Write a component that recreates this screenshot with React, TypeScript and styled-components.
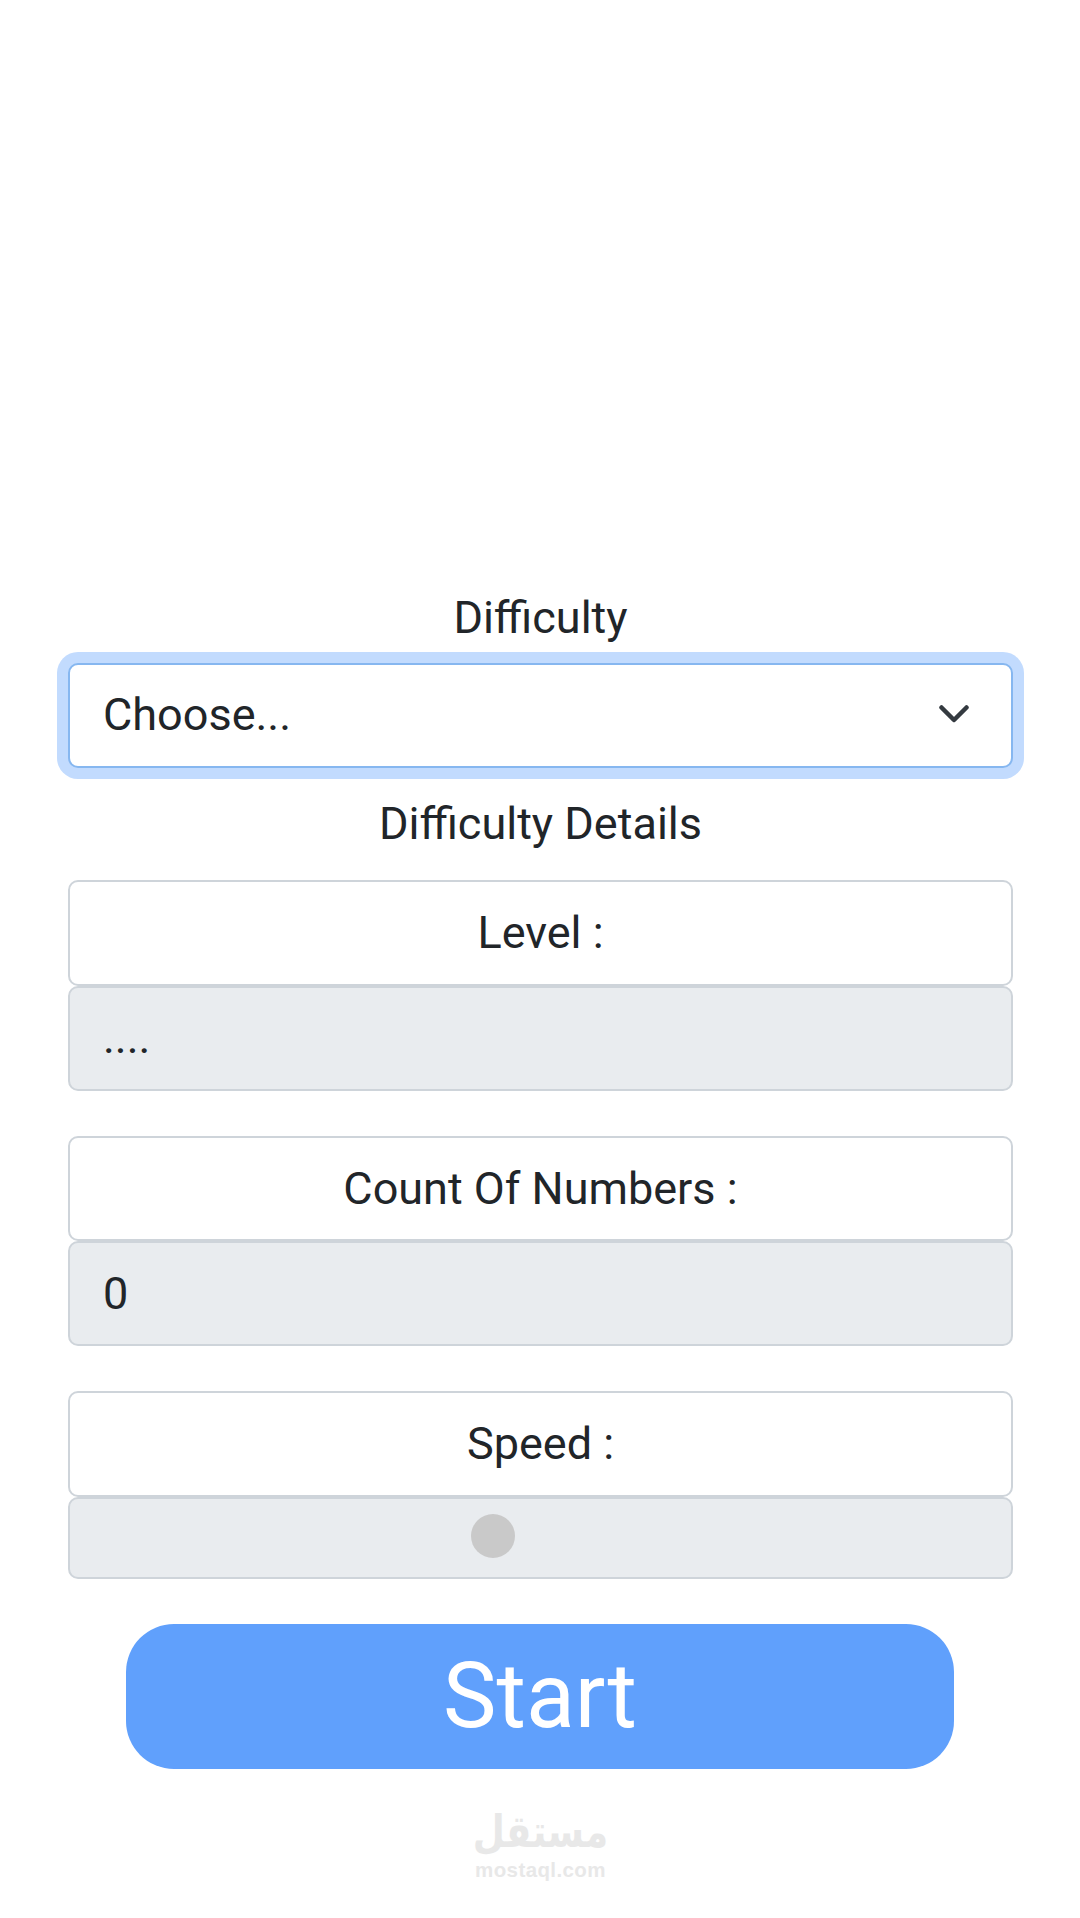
import styled, { createGlobalStyle } from "styled-components"

const GlobalStyle = createGlobalStyle`
  html, body {
    margin: 0;
    padding: 0;
    background: #fff;
    font-family: Roboto, "Liberation Sans", sans-serif;
    color: #212529;
  }
`

type GroupType = {
  label: string
  children: React.ReactNode
}

const Group = (props: GroupType) => (
  <InputGroup>
    <GroupLabel>{props.label}</GroupLabel>
    {props.children}
  </InputGroup>
)

export default function App() {
  return (
    <Page>
      <GlobalStyle />
      <Title>Difficulty</Title>
      <SelectBox>
        Choose...
        <svg width="30" height="18" viewBox="0 0 30 18" fill="none">
          <path d="M2.5 2.5L15 15L27.5 2.5" stroke="#343a40" strokeWidth="4.5" strokeLinecap="round" strokeLinejoin="round" />
        </svg>
      </SelectBox>
      <DetailsTitle>Difficulty Details</DetailsTitle>
      <Group label="Level :">
        <ValueBox>....</ValueBox>
      </Group>
      <Group label="Count Of Numbers :">
        <ValueBox>0</ValueBox>
      </Group>
      <Group label="Speed :">
        <SliderBox>
          <Thumb />
        </SliderBox>
      </Group>
      <StartButton>Start</StartButton>
      <Logo>
        <LogoArabic>مستقل</LogoArabic>
        <LogoLatin>mostaql.com</LogoLatin>
      </Logo>
    </Page>
  )
}

const Page = styled.div`
  width: 1080px;
  height: 1918px;
  box-sizing: border-box;
  padding: 590px 67px 0 68px;
  display: flex;
  flex-direction: column;
  align-items: stretch;
  overflow: hidden;
`

const Title = styled.div`
  height: 62px;
  line-height: 56px;
  font-size: 45px;
  text-align: center;
  margin-bottom: 11px;
`

const SelectBox = styled.div`
  height: 105px;
  box-sizing: border-box;
  padding: 0 42px 3px 33px;
  display: flex;
  align-items: center;
  justify-content: space-between;
  font-size: 45px;
  background: #fff;
  border: 2px solid #86b7f0;
  border-radius: 10px;
  box-shadow: 0 0 0 11px #c2dbfe;
`

const DetailsTitle = styled.div`
  height: 62px;
  line-height: 56px;
  margin-top: 28px;
  margin-bottom: 22px;
  font-size: 45px;
  text-align: center;
`

const InputGroup = styled.div`
  display: flex;
  flex-direction: column;
  margin-bottom: 45px;
`

const GroupLabel = styled.div`
  height: 105.5px;
  box-sizing: border-box;
  display: flex;
  align-items: center;
  justify-content: center;
  font-size: 45px;
  background: #fff;
  border: 2px solid #ced4da;
  border-radius: 10px;
`

const ValueBox = styled.div`
  height: 105px;
  box-sizing: border-box;
  display: flex;
  align-items: center;
  padding: 0 33px 1px;
  font-size: 45px;
  background: #e9ecef;
  border: 2px solid #ced4da;
  border-radius: 10px;
`

const SliderBox = styled(ValueBox)`
  height: 82.5px;
  padding: 0 0 3px 401px;
`

const Thumb = styled.div`
  width: 44px;
  height: 44px;
  border-radius: 50%;
  background: #c9c9c9;
`

const StartButton = styled.div`
  align-self: flex-start;
  margin-left: 58px;
  width: 828px;
  height: 145px;
  display: flex;
  align-items: center;
  justify-content: center;
  background: #60a0fc;
  color: #fff;
  font-size: 90px;
  border-radius: 48px;
`

const Logo = styled.div`
  align-self: center;
  margin-top: 48px;
  display: flex;
  flex-direction: column;
  align-items: center;
  color: #e8e8e8;
`

const LogoArabic = styled.div`
  font-family: "DejaVu Sans", sans-serif;
  font-weight: 700;
  font-size: 37px;
  line-height: 40px;
  margin-bottom: 3px;
  transform-origin: bottom center;
  transform: scaleY(1.2);
`

const LogoLatin = styled.div`
  font-family: "Liberation Sans", sans-serif;
  font-weight: 700;
  font-size: 20.5px;
  line-height: 20px;
  letter-spacing: 0.4px;
`
